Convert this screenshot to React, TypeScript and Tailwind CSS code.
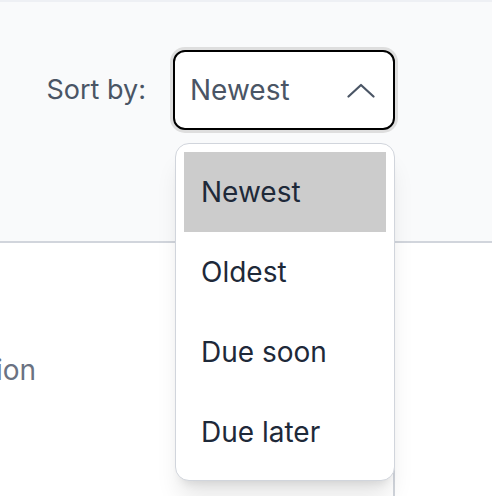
import React, { useState } from 'react';

const OPTIONS = ['Newest', 'Oldest', 'Due soon', 'Due later'];

const ChevronUp = () => (
  <svg width="28" height="15" viewBox="0 0 28 15" fill="none" className="text-gray-600">
    <polyline points="1.5,13.5 14,2 26.5,13.5" stroke="currentColor" strokeWidth="2.2" strokeLinecap="round" strokeLinejoin="round" />
  </svg>
);

const SortSelect = () => {
  const [value, setValue] = useState('Newest');

  return (
    <div className="relative">
      <button className="flex h-[80px] w-[222px] items-center justify-between rounded-[12px] border-2 border-black bg-white pl-[15px] pr-[18px] text-[28px] text-gray-600 ring-[3px] ring-[#dedede]">
        <span>{value}</span>
        <ChevronUp />
      </button>
      <ul className="absolute left-[2px] top-[93px] z-10 w-[220px] rounded-[14px] border border-gray-300 bg-white p-2 shadow-xl">
        {OPTIONS.map((opt) => (
          <li
            key={opt}
            onClick={() => setValue(opt)}
            className={`flex h-[80px] items-center pl-[17px] text-[28px] text-gray-800 ${
              opt === value ? 'bg-[#cccccc]' : ''
            }`}
          >
            {opt}
          </li>
        ))}
      </ul>
    </div>
  );
};

export default function App() {
  return (
    <div className="flex h-[496px] w-[492px] flex-col overflow-hidden bg-white font-['Inter',sans-serif]">
      <div className="h-[2px] bg-[#eef0f4]" />
      <div className="flex h-[241px] items-start justify-end border-b-2 border-gray-300 bg-gray-50 pr-[97px] pt-[48px]">
        <div className="flex items-center gap-[27px]">
          <span className="text-[27px] text-gray-600">Sort by:</span>
          <SortSelect />
        </div>
      </div>
      <div className="flex flex-1">
        <div className="w-[395px] border-r-2 border-gray-300 pt-[107px]">
          <div className="flex w-[36px] justify-end whitespace-nowrap text-[28px] leading-[40px] text-gray-500">
            Description
          </div>
        </div>
      </div>
    </div>
  );
}
